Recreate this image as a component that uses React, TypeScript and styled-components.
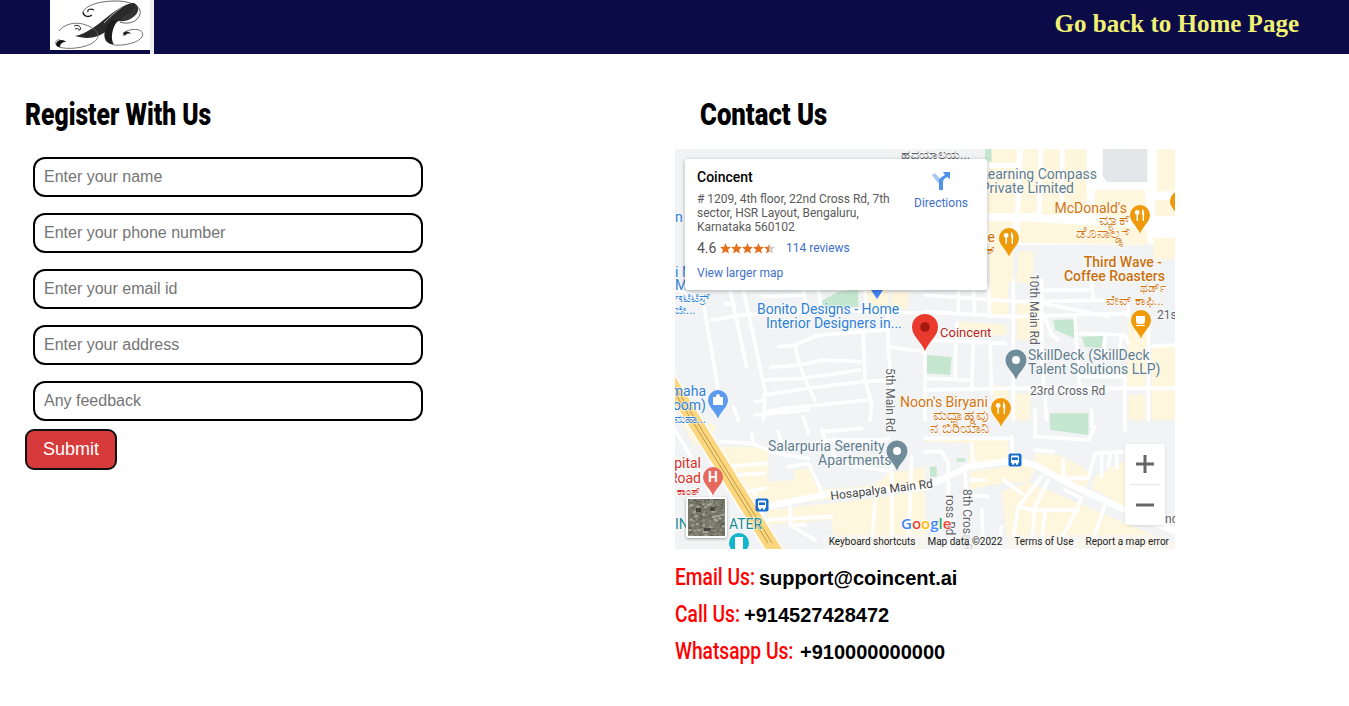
import React from "react";
import styled, { createGlobalStyle } from "styled-components";

const Global = createGlobalStyle`
  html, body { margin: 0; padding: 0; background: #fff; }
  body { font-family: "Liberation Sans", Arial, sans-serif; overflow: hidden; }
  * { box-sizing: border-box; }
`;
const Page = styled.div`width: 1349px; height: 706px; display: flex; flex-direction: column;`;
const Header = styled.header`
  height: 54px; background: #0b0b48; display: flex; justify-content: space-between;
  padding: 0 50px; flex-shrink: 0;
`;
const LogoBox = styled.div`width: 104px; height: 54px; display: flex; align-items: flex-start; border-right: 4px solid #eee;`;
const LogoInner = styled.div`width: 100px; height: 50px; background: #fff; display: flex;`;
const HomeLink = styled.a`
  font: bold 25px/48px "Liberation Serif", "Times New Roman", serif; color: #f2f272; text-decoration: none;
`;
const Columns = styled.main`display: grid; grid-template-columns: 675px 1fr; flex: 1;`;
const LeftCol = styled.section`padding: 44px 0 0 25px;`;
const RightCol = styled.section`padding: 44px 0 0 0;`;
const Heading = styled.h2<{ $indent?: number }>`
  margin: 0 0 ${(p) => (p.$indent ? 17 : 25)}px ${(p) => p.$indent ?? 0}px; height: 34px;
  font: 900 31px/34px Roboto, sans-serif; color: #000; white-space: nowrap;
  transform: scaleX(${(p) => (p.$indent ? 0.83 : 0.795)}); transform-origin: left center;
`;
const Form = styled.form`display: flex; flex-direction: column; align-items: flex-start;`;
const Field = styled.input`
  width: 390px; height: 40px; margin: 0 0 16px 8px; border: 2.5px solid #000; border-radius: 12px; padding: 0 9px;
  font: 16px "Liberation Sans", Arial, sans-serif; outline: none; background: #fff;
  &::placeholder { color: #757575; opacity: 1; }
`;
const Submit = styled.button`
  width: 92px; height: 41px; margin-top: -8px; background: #d63a3a; border: 2px solid #111; border-radius: 9px; color: #fff;
  font: 18px "Liberation Sans", Arial, sans-serif; padding: 0;
`;
const MapFrame = styled.div`position: relative; width: 500px; height: 400px; overflow: hidden; background: #f1f3f4;`;
const MapArt = styled.svg`display: block; width: 500px; height: 400px;`;
const Card = styled.div`
  position: absolute; left: 10px; top: 10px; width: 302px; height: 131px; background: #fff; border-radius: 2px;
  box-shadow: 0 1px 4px rgba(0,0,0,.3); padding: 10px 12px; font-family: Roboto, sans-serif;
  display: grid; grid-template-columns: 1fr 74px;
`;
const CardMain = styled.div`display: flex; flex-direction: column; min-width: 0;`;
const PlaceName = styled.div`font-size: 14px; line-height: 16px; font-weight: 500; color: #000; margin-bottom: 7px;`;
const Address = styled.div`font-size: 12px; line-height: 14px; color: #5b5b5b; width: 200px;`;
const RatingRow = styled.div`display: flex; align-items: center; margin-top: 6px; height: 16px;`;
const Score = styled.span`font-size: 14px; color: #555; width: 23px;`;
const Reviews = styled.a`font-size: 12px; color: #3f6fc8; margin-left: 10px;`;
const Larger = styled.a`font-size: 12px; color: #3f6fc8; margin-top: 10px;`;
const Directions = styled.div`
  display: flex; flex-direction: column; align-items: center; padding: 2px 0 0 6px; font-size: 12px; color: #3f6fc8; gap: 5px; white-space: nowrap;
`;
const Zoom = styled.div`
  position: absolute; left: 450px; top: 295px; width: 40px; height: 81px; background: #fff; border-radius: 2px;
  display: flex; flex-direction: column; align-items: center; box-shadow: 0 1px 3px rgba(0,0,0,.12);
`;
const ZoomBtn = styled.div`flex: 1; width: 100%; display: flex; align-items: center; justify-content: center;`;
const ZoomRule = styled.div`width: 30px; height: 1px; background: #e6e6e6;`;
const Thumb = styled.div`
  position: absolute; left: 11px; top: 348px; width: 41px; height: 41px; border: 2px solid #fff; border-radius: 2px; box-shadow: 0 1px 3px rgba(0,0,0,.35);
  background: #6e6e60; overflow: hidden;
`;
const Attribution = styled.div`
  position: absolute; right: 0; bottom: 0; left: 148px; height: 14px; background: rgba(245,245,245,.72);
  display: flex; justify-content: flex-end; gap: 12px; padding-right: 6px;
  font: 10px/14px Roboto, sans-serif; color: #222; white-space: nowrap;
`;
const ContactList = styled.div`margin-top: 13px; display: flex; flex-direction: column; gap: 7px;`;
const ContactRow = styled.div`height: 30px; display: flex; align-items: baseline; white-space: nowrap;`;
const ContactLabel = styled.span<{ $w: number }>`width: ${(p) => p.$w}px; flex-shrink: 0;`;
const LabelText = styled.span`
  display: inline-block; font: 500 24px/30px Roboto, sans-serif; color: #f00;
  transform: scaleX(.8); transform-origin: left center;
`;
const ContactValue = styled.span`font: bold 20px/30px "Liberation Sans", Arial, sans-serif; color: #000;`;

const Logo = () => (
  <svg width="100" height="50" viewBox="0 0 100 50" fill="none">
    <path d="M33 12 C36 5 50 1 66 1 C80 1 92 6 90 14 C88 22 78 25 70 22" stroke="#666" strokeWidth="1" />
    <path d="M33 12 C33 16 38 18 42 15 M44 10 C40 8 37 10 38 12" stroke="#222" strokeWidth="1.3" />
    <path d="M84 3 C90 6 90 13 82 18 C76 22 70 22 64 20 C72 19 80 14 82 9 Z" fill="#333" />
    <path d="M84 3 C87 8 80 14 74 17 C64 23 58 32 48 36 C40 39 32 38 25 36 C36 34 46 26 56 18 C66 10 76 3 84 3 Z" fill="#2a2a2a" />
    <path d="M72 7 C66 11 60 17 54 23" stroke="#bbb" strokeWidth="1" />
    <path d="M9 31 C14 24 26 21 36 25 C47 29 52 36 44 42 C36 48 18 50 9 47 C4 45 5 39 10 40" stroke="#666" strokeWidth=".9" />
    <path d="M6 44 C7 39 14 39 16 42 C12 42 10 44 10 47 C8 47 6 46 6 44 Z" fill="#111" />
    <path d="M24 26 C28 24 32 27 30 30 M25 29 C28 28 30 29 29 31" stroke="#222" strokeWidth="1" />
    <path d="M62 20 C56 26 52 34 56 41 C58 43 60 44 64 45 C60 38 62 28 68 20 Z" fill="#1d1d1d" />
    <path d="M64 45 C74 46 88 43 92 37 C95 31 88 28 80 30 C75 31 72 34 74 36" stroke="#666" strokeWidth=".9" />
    <path d="M73 33 C76 30 80 32 81 34 C78 33 76 34 75 36 Z" fill="#222" />
  </svg>
);

type P = [number, number];
const pl = (a: P[]) => a.map((p) => p.join(",")).join(" ");
/* Crop-space tracing: points read off 3x crops, mapped to map-local pixels. */
const z = (ox: number, oy: number, pts: number[][]) => pts.map(([x, y]) => [ox + x / 3, oy + y / 3] as P);
const A = (...p: number[][]) => z(0, 131, p);
const B = (...p: number[][]) => z(0, 261, p);
const C = (...p: number[][]) => z(250, 131, p);
const D = (...p: number[][]) => z(250, 261, p);
const E = (...p: number[][]) => z(310, -1, p);

const creamZones: P[][] = [
  B([110,40],[20,40],[60,110],[130,50]),
  B([140,110],[280,110],[280,215],[360,210],[355,180],[400,175],[430,240],[600,225],[640,190],[750,170],[750,230],[280,290],[240,280],[200,280],[160,200]),
  B([280,300],[600,265],[750,240],[750,417],[480,417],[470,330],[270,345]),
  D([0,85],[250,85],[250,150],[130,165],[135,100],[0,95]),
  D([135,185],[300,160],[330,180],[310,215],[200,225],[135,240]),
  D([230,245],[310,215],[600,340],[750,400],[750,417],[250,417]),
  D([330,130],[400,135],[470,170],[500,195],[480,235],[330,165]),
  D([510,200],[600,150],[600,290],[500,235]),
  A([575,30],[640,30],[640,90],[575,90]),
  A([650,35],[700,35],[700,85],[650,85]),
  C([195,0],[250,0],[250,110],[195,110]),
  C([275,70],[345,70],[345,180],[275,180]),
  C([100,125],[245,135],[245,165],[100,170]),
  C([610,110],[670,115],[660,330],[605,325]),
  C([680,200],[750,200],[750,420],[680,420]),
  C([610,345],[660,345],[660,420],[610,420]),
  C([270,340],[315,340],[315,420],[270,420]),
  C([205,315],[250,320],[250,420],[205,420]),
];
const topWhite: P[] = E([0,0],[570,0],[570,290],[0,290]);
const topBlocks: P[][] = [
  E([10,0],[95,0],[95,45],[10,45]),
  E([10,60],[95,60],[90,195],[8,195]),
  E([115,0],[160,0],[155,195],[105,195]),
  E([175,0],[225,0],[225,200],[170,200]),
  E([240,0],[305,0],[305,195],[235,200]),
  E([330,125],[480,125],[485,215],[325,200]),
  E([105,220],[480,240],[490,290],[105,285]),
  E([515,0],[570,0],[570,130],[515,130]),
  E([510,155],[570,155],[570,205],[510,205]),
  E([505,270],[570,270],[570,335],[505,335]),
  E([10,220],[85,220],[85,405],[15,405]),
  E([100,310],[145,310],[145,405],[95,405]),
];
const darkBlock: P[] = E([350,0],[490,0],[490,105],[365,105],[350,85]);
const roads: P[][] = [
  A([85,70],[130,330]), A([110,120],[200,105],[430,90],[750,100]), A([165,30],[215,260]), A([205,30],[270,330],[265,420]),
  A([310,200],[360,195],[430,165],[570,155],[640,150]), A([360,195],[375,260],[400,320],[420,360]),
  A([290,262],[370,255],[450,240],[555,245]), A([265,300],[385,295],[555,270]), A([265,345],[400,325],[560,305],[650,300]),
  A([240,365],[270,360]), A([270,395],[330,385],[580,360]), A([565,165],[570,300],[590,370],[585,420]),
  A([640,100],[640,200],[655,420]), A([640,200],[750,215]), A([430,30],[440,90]), A([570,30],[575,95]),
  A([255,50],[385,45]), A([385,30],[395,90]), A([150,70],[180,75]), A([175,380],[190,420]),
  A([-10,20],[90,60]),
  B([240,15],[400,0]), B([385,20],[400,70]), B([310,65],[325,125]), B([230,70],[235,100]),
  B([135,95],[230,100],[300,130],[400,145]), B([440,65],[560,55]), B([440,60],[450,90],[620,90],[640,85]),
  B([450,90],[490,160],[650,185]), B([340,170],[400,160],[440,245]), B([150,170],[275,160]), B([170,195],[270,190]),
  B([270,330],[470,320]), B([345,290],[345,345],[420,390]), B([350,345],[390,345]), B([600,270],[590,417]),
  B([650,170],[650,417]), B([0,60],[100,230],[120,300]), B([710,140],[700,417]), B([240,250],[290,400]), B([180,250],[270,235]),
  C([265,0],[265,420]), C([350,0],[350,230],[365,420]), C([0,45],[270,65],[580,60]), C([0,95],[260,110],[610,100]),
  C([0,180],[240,190]), C([95,130],[90,290]), C([145,180],[140,330]), C([195,185],[200,340]), C([100,30],[100,100]),
  C([145,30],[150,105]), C([190,20],[195,110]), C([0,295],[130,300]), C([0,330],[270,325],[750,325]), C([360,115],[380,165],[400,180]),
  C([465,160],[600,165],[610,190]), C([450,110],[460,290],[465,320]), C([470,290],[600,290],[600,420]), C([540,170],[535,230]),
  C([590,170],[580,225]), C([670,200],[750,195]), C([670,140],[670,420]), C([0,190],[0,420]), C([355,70],[550,110]),
  C([350,30],[490,30]), C([500,0],[505,60]), C([610,60],[610,110]),
  D([330,80],[490,90],[510,50]), D([330,80],[330,0]), D([500,0],[500,50]), D([600,0],[600,60]),
  D([235,210],[290,250]), D([140,210],[180,210]), D([130,255],[190,260]), D([120,170],[130,417]),
  D([350,200],[280,290],[265,380]), D([370,210],[330,290],[320,400]), D([285,290],[320,300],[460,300]),
  D([420,240],[470,265],[440,330],[400,400]), D([540,285],[500,400]), D([330,120],[385,125]),
  D([415,150],[415,205],[490,205],[510,130],[600,125]), D([530,130],[530,200]), D([555,135],[550,170]), D([575,135],[575,175]),
  D([0,85],[250,85]), D([140,100],[145,160]), D([0,125],[50,125],[70,160],[70,230]), D([170,300],[175,417]), D([230,350],[220,417]),
  D([70,230],[75,417]), D([260,80],[265,170]), D([360,300],[350,400]),
];
const mainRoad: P[] = [...B([270,290],[470,250],[750,232]), ...D([130,170],[270,150],[330,165],[430,220],[600,300],[750,365])];
const green: P[][] = [
  A([435,65],[490,35],[550,30],[550,80],[445,85]),
  C([385,120],[450,118],[455,178],[390,150]), C([470,170],[535,168],[530,205],[480,200]), C([5,225],[80,232],[75,285],[5,280]),
  D([375,10],[490,10],[490,75],[375,60]), D([95,145],[120,145],[120,155],[95,155]), B([765,170],[785,170],[785,200],[765,200]),
  E([0,0],[20,0],[20,40],[0,40]),
];

const Pin = ({ x, y, c, r = 10, children }: { x: number; y: number; c: string; r?: number; children?: React.ReactNode }) => (
  <g transform={`translate(${x},${y})`}>
    <path d={`M0 ${r * 1.85} C-${r * 0.3} ${r * 1.1} -${r} ${r * 0.7} -${r} 0 A${r} ${r} 0 1 1 ${r} 0 C${r} ${r * 0.7} ${r * 0.3} ${r * 1.1} 0 ${r * 1.85} Z`} fill={c} />
    {children}
  </g>
);
const Fork = () => (
  <g fill="#fff">
    <circle cx="-2.8" cy="-2.6" r="2.4" /><rect x="-3.5" y="-2" width="1.5" height="8" rx=".7" />
    <path d="M2 -6 C4.5 -5.5 4.5 0 4 1 V6 H2.6 V0 H2Z" />
  </g>
);
const Bus = ({ x, y }: { x: number; y: number }) => (
  <g transform={`translate(${x},${y})`}>
    <rect x="-6.5" y="-6.5" width="13" height="13" rx="2" fill="#1a6dd0" /><rect x="-4" y="-4.4" width="8" height="7.6" rx="1.2" fill="#fff" />
    <rect x="-3" y="-2.6" width="6" height="2.6" fill="#1a6dd0" /><rect x="-3" y="3" width="2" height="1.6" fill="#fff" /><rect x="1" y="3" width="2" height="1.6" fill="#fff" />
  </g>
);
const Lbl = ({ x, y, c, a = "start", s = 14, w = 400, rot, children }: any) => (
  <text x={x} y={y} fill={c} fontSize={s} fontWeight={w} textAnchor={a} fontFamily="Roboto, 'Noto Sans', sans-serif"
    stroke="rgba(255,255,255,.7)" strokeWidth={1.6} paintOrder="stroke"
    transform={rot ? `rotate(${rot} ${x} ${y})` : undefined}>{children}</text>
);

const slate = "#5f7d8e"; const grey = "#5f6368"; const orange = "#d2740f"; const blue = "#2f7fd6"; const red = "#d93025";

const MapDrawing = () => (
  <MapArt viewBox="0 0 500 400">
    <polygon points={pl(topWhite)} fill="#fff" />
    {creamZones.map((c, i) => <polygon key={i} points={pl(c)} fill="#fef6dd" />)}
    {topBlocks.map((c, i) => <polygon key={i} points={pl(c)} fill="#fef6dd" />)}
    <polygon points={pl(darkBlock)} fill="#e4e6e9" stroke="#fff" strokeWidth="2" />
    <polygon points={pl(E([210,310],[285,315],[280,340],[210,335]))} fill="#f1f3f4" />
    <polygon points={pl(E([160,305],[190,305],[190,405],[160,405]))} fill="#f1f3f4" />
    <polygon points={pl(E([205,355],[310,375],[310,405],[205,405]))} fill="#f1f3f4" />
    {green.map((g, i) => <polygon key={i} points={pl(g)} fill="#c5e6cf" />)}
    {roads.map((r, i) => <polyline key={i} points={pl(r)} fill="none" stroke="#fff" strokeWidth="3.6" strokeLinecap="round" strokeLinejoin="round" />)}
    <polyline points={pl(mainRoad)} fill="none" stroke="#fff" strokeWidth="6.5" strokeLinejoin="round" />

    <polyline points="-8,228 95,394 102,405" fill="none" stroke="#fff" strokeWidth="17" />
    <polyline points="-8,228 95,394 102,405" fill="none" stroke="#fdd77f" strokeWidth="14" />
    <polyline points="-10,228 93,394" fill="none" stroke="#a98a3a" strokeWidth=".8" />
    <polyline points="-6,228 97,394" fill="none" stroke="#a98a3a" strokeWidth=".8" />

    <path d="M196 141 L208 141 L202 150 Z" fill="#4285f4" />

    <Lbl x={422} y={30} c={slate} a="end">Learning Compass</Lbl>
    <Lbl x={399} y={44} c={slate} a="end">Private Limited</Lbl>
    <Lbl x={226} y={10} c={grey} s={13}>ಹೃದಯಾಲಯ...</Lbl>
    <Lbl x={0} y={73} c={blue}>n A</Lbl>
    <Lbl x={0} y={128} c={blue}>i M</Lbl>
    <Lbl x={0} y={141} c={blue}>M</Lbl>
    <Lbl x={0} y={153} c={blue} s={12}>ಇಟಿಟಿಸ್ರ್</Lbl>
    <Lbl x={0} y={165} c={blue} s={12}>ಜೀ...</Lbl>
    <Lbl x={452} y={64} c={orange} a="end">McDonald's</Lbl>
    <Lbl x={455} y={76} c={orange} a="end" s={14}>ಮ್ಯಾಕ್</Lbl>
    <Lbl x={455} y={89} c={orange} a="end" s={15}>ಡೊನಾಲ್ಡ್ಸ್</Lbl>
    <Pin x={465} y={66} c="#ef9a0a"><Fork /></Pin>
    <Pin x={334} y={89} c="#ef9a0a"><Fork /></Pin>
    <Pin x={505} y={52} c="#ef9a0a" />
    <Lbl x={320} y={93} c={orange} a="end">e</Lbl>
    <Lbl x={321} y={105} c={orange} a="end" s={11}>ಕ್</Lbl>
    <Lbl x={487} y={118} c="#c9700e" a="end" w={500}>Third Wave -</Lbl>
    <Lbl x={490} y={132} c="#c9700e" a="end" w={500}>Coffee Roasters</Lbl>
    <Lbl x={491} y={143} c={orange} a="end" s={12}>ಥರ್ಡ್</Lbl>
    <Lbl x={489} y={156} c={orange} a="end" s={13}>ವೇವ್ ಕಾಫಿ...</Lbl>
    <Pin x={466} y={171} c="#ef9a0a"><path d="M-5 -4H4V1A3 3 0 0 1 1 4H-2A3 3 0 0 1 -5 1ZM-5 5H4V6H-5Z" fill="#fff" /></Pin>
    <Lbl x={482} y={170} c={grey} s={12}>21s</Lbl>
    <Lbl x={355} y={125} c={grey} s={12} rot={90}>10th Main Rd</Lbl>
    <Lbl x={211} y={219} c={grey} s={12} rot={90}>5th Main Rd</Lbl>
    <Lbl x={82} y={165} c={blue}>Bonito Designs - Home</Lbl>
    <Lbl x={91} y={179} c={blue}>Interior Designers in...</Lbl>
    <Pin x={250} y={178} c="#ea3a2e" r={13}><circle r="4.8" fill="#a51a10" /></Pin>
    <Lbl x={265} y={188} c="#b3261e" s={13}>Coincent</Lbl>
    <Pin x={341} y={211} c="#708b9a" r={10.5}><circle r="4" fill="#fff" /></Pin>
    <Lbl x={353} y={211} c={slate}>SkillDeck (SkillDeck</Lbl>
    <Lbl x={353} y={225} c={slate}>Talent Solutions LLP)</Lbl>
    <Lbl x={355} y={246} c={grey} s={12}>23rd Cross Rd</Lbl>
    <Lbl x={225} y={258} c={orange}>Noon's Biryani</Lbl>
    <Lbl x={314} y={271} c={orange} a="end" s={15}>ಮಧ್ಯಾಹ್ನವು</Lbl>
    <Lbl x={314} y={284} c={orange} a="end" s={15}>ನ ಬಿರಿಯಾನಿ</Lbl>
    <Pin x={326} y={259} c="#ef9a0a"><Fork /></Pin>
    <Pin x={43} y={251} c="#5b9bf0"><path d="M-5 -3H5V5H-5Z M-2 -3A2 3 0 0 1 2 -3" fill="#fff" /></Pin>
    <Lbl x={31} y={247} c={blue} a="end">maha</Lbl>
    <Lbl x={31} y={261} c={blue} a="end">oom)</Lbl>
    <Lbl x={31} y={274} c={blue} a="end" s={12}>ಮಹಾ...</Lbl>
    <Lbl x={93} y={302} c={slate}>Salarpuria Serenity</Lbl>
    <Lbl x={143} y={316} c={slate}>Apartments</Lbl>
    <Pin x={222} y={302} c="#708b9a" r={10.5}><circle r="4" fill="#fff" /></Pin>
    <Lbl x={156} y={351} c="#444" s={12} rot={-7}>Hosapalya Main Rd</Lbl>
    <Bus x={87} y={356} />
    <Bus x={340} y={311} />
    <Lbl x={26} y={319} c={red} a="end">pital</Lbl>
    <Lbl x={26} y={334} c={red} a="end">Road</Lbl>
    <Lbl x={26} y={346} c={red} a="end" s={11}>ಕಾಂತ್</Lbl>
    <Pin x={38} y={328} c="#e5695e"><text x="0" y="5" fill="#fff" fontSize="14" fontFamily="Roboto" fontWeight="700" textAnchor="middle">H</text></Pin>
    <Lbl x={0} y={380} c="#1a8a96">IN</Lbl>
    <Lbl x={54} y={380} c="#1a8a96">ATER</Lbl>
    <circle cx="64" cy="394" r="10" fill="#12b5cb" />
    <rect x="60" y="388" width="8" height="12" fill="#fff" />
    <Lbl x={288} y={340} c={grey} s={12} rot={90}>8th Cross Rd</Lbl>
    <Lbl x={271} y={346} c={grey} s={12} rot={90}>ross Rd</Lbl>
    <Lbl x={490} y={374} c={grey} s={12}>nd</Lbl>
    <text x="226" y="380" fontFamily="'Open Sans', Roboto, sans-serif" fontSize="15" fontWeight="600" stroke="#fff" strokeWidth="1.5" paintOrder="stroke">
      <tspan fill="#4285f4">G</tspan><tspan fill="#ea4335">o</tspan><tspan fill="#fbbc05">o</tspan><tspan fill="#4285f4">g</tspan><tspan fill="#34a853">l</tspan><tspan fill="#ea4335">e</tspan>
    </text>
  </MapArt>
);

const star = "M5.5 0 L7 3.8 L11 4.1 L8 6.7 L9 10.6 L5.5 8.5 L2 10.6 L3 6.7 L0 4.1 L4 3.8 Z";
const Stars = () => (
  <svg width="56" height="11" viewBox="0 0 56 11">
    <defs><linearGradient id="half"><stop offset="50%" stopColor="#e7711b" /><stop offset="50%" stopColor="#ccc" /></linearGradient></defs>
    {[0, 1, 2, 3, 4].map((i) => <path key={i} d={star} transform={`translate(${i * 11},0)`} fill={i === 4 ? "url(#half)" : "#e7711b"} />)}
  </svg>
);
const DirIcon = () => (
  <svg width="20" height="20" viewBox="0 0 20 20">
    <path d="M1 4 L4 2 L10 9 V12 H7 Z" fill="#a9c7ef" />
    <path d="M8 19 V10 C8 7 11 6 14 4 L12 1 H19 V8 L16 6 C13 8 12 9 12 11 V19 Z" fill="#4f94e8" />
  </svg>
);
const SatTiles = () => (
  <svg width="37" height="37" viewBox="0 0 37 37">
    <rect width="37" height="37" fill="#77776a" />
    {Array.from({ length: 220 }).map((_, i) => {
      const x = Math.abs(Math.sin(i * 12.9898) * 43758.5) % 37, y = Math.abs(Math.sin(i * 78.233) * 12543.1) % 37;
      const cols = ["#55554a", "#8d8d7f", "#63665a", "#9a9a8c", "#4b5046", "#a6a698"];
      return <rect key={i} x={x.toFixed(1)} y={y.toFixed(1)} width={1 + (i % 3)} height={1 + (i % 2)} fill={cols[i % 6]} />;
    })}
    <rect x="8" y="9" width="5" height="4" fill="#44463e" /><rect x="22" y="8" width="5" height="4" fill="#48493f" /><rect x="16" y="29" width="6" height="3" fill="#44463e" />
  </svg>
);

export default function App() {
  return (
    <Page>
      <Global />
      <Header>
        <LogoBox><LogoInner><Logo /></LogoInner></LogoBox>
        <HomeLink href="#">Go back to Home Page</HomeLink>
      </Header>
      <Columns>
        <LeftCol>
          <Heading>Register With Us</Heading>
          <Form onSubmit={(e) => e.preventDefault()}>
            <Field placeholder="Enter your name" />
            <Field placeholder="Enter your phone number" />
            <Field placeholder="Enter your email id" />
            <Field placeholder="Enter your address" />
            <Field placeholder="Any feedback" />
            <Submit type="submit">Submit</Submit>
          </Form>
        </LeftCol>
        <RightCol>
          <Heading $indent={25}>Contact Us</Heading>
          <MapFrame>
            <MapDrawing />
            <Card>
              <CardMain>
                <PlaceName>Coincent</PlaceName>
                <Address># 1209, 4th floor, 22nd Cross Rd, 7th sector, HSR Layout, Bengaluru, Karnataka 560102</Address>
                <RatingRow><Score>4.6</Score><Stars /><Reviews>114 reviews</Reviews></RatingRow>
                <Larger>View larger map</Larger>
              </CardMain>
              <Directions><DirIcon />Directions</Directions>
            </Card>
            <Zoom>
              <ZoomBtn><svg width="18" height="18" viewBox="0 0 18 18"><path d="M0 7.5H7.5V0H10.5V7.5H18V10.5H10.5V18H7.5V10.5H0Z" fill="#666" /></svg></ZoomBtn>
              <ZoomRule />
              <ZoomBtn><svg width="18" height="18" viewBox="0 0 18 18"><path d="M0 7.5H18V10.5H0Z" fill="#666" /></svg></ZoomBtn>
            </Zoom>
            <Thumb><SatTiles /></Thumb>
            <Attribution>
              <span>Keyboard shortcuts</span><span>Map data ©2022</span><span>Terms of Use</span><span>Report a map error</span>
            </Attribution>
          </MapFrame>
          <ContactList>
            <ContactRow><ContactLabel $w={84}><LabelText>Email Us:</LabelText></ContactLabel><ContactValue>support@coincent.ai</ContactValue></ContactRow>
            <ContactRow><ContactLabel $w={69}><LabelText>Call Us:</LabelText></ContactLabel><ContactValue>+914527428472</ContactValue></ContactRow>
            <ContactRow><ContactLabel $w={125}><LabelText>Whatsapp Us:</LabelText></ContactLabel><ContactValue>+910000000000</ContactValue></ContactRow>
          </ContactList>
        </RightCol>
      </Columns>
    </Page>
  );
}
